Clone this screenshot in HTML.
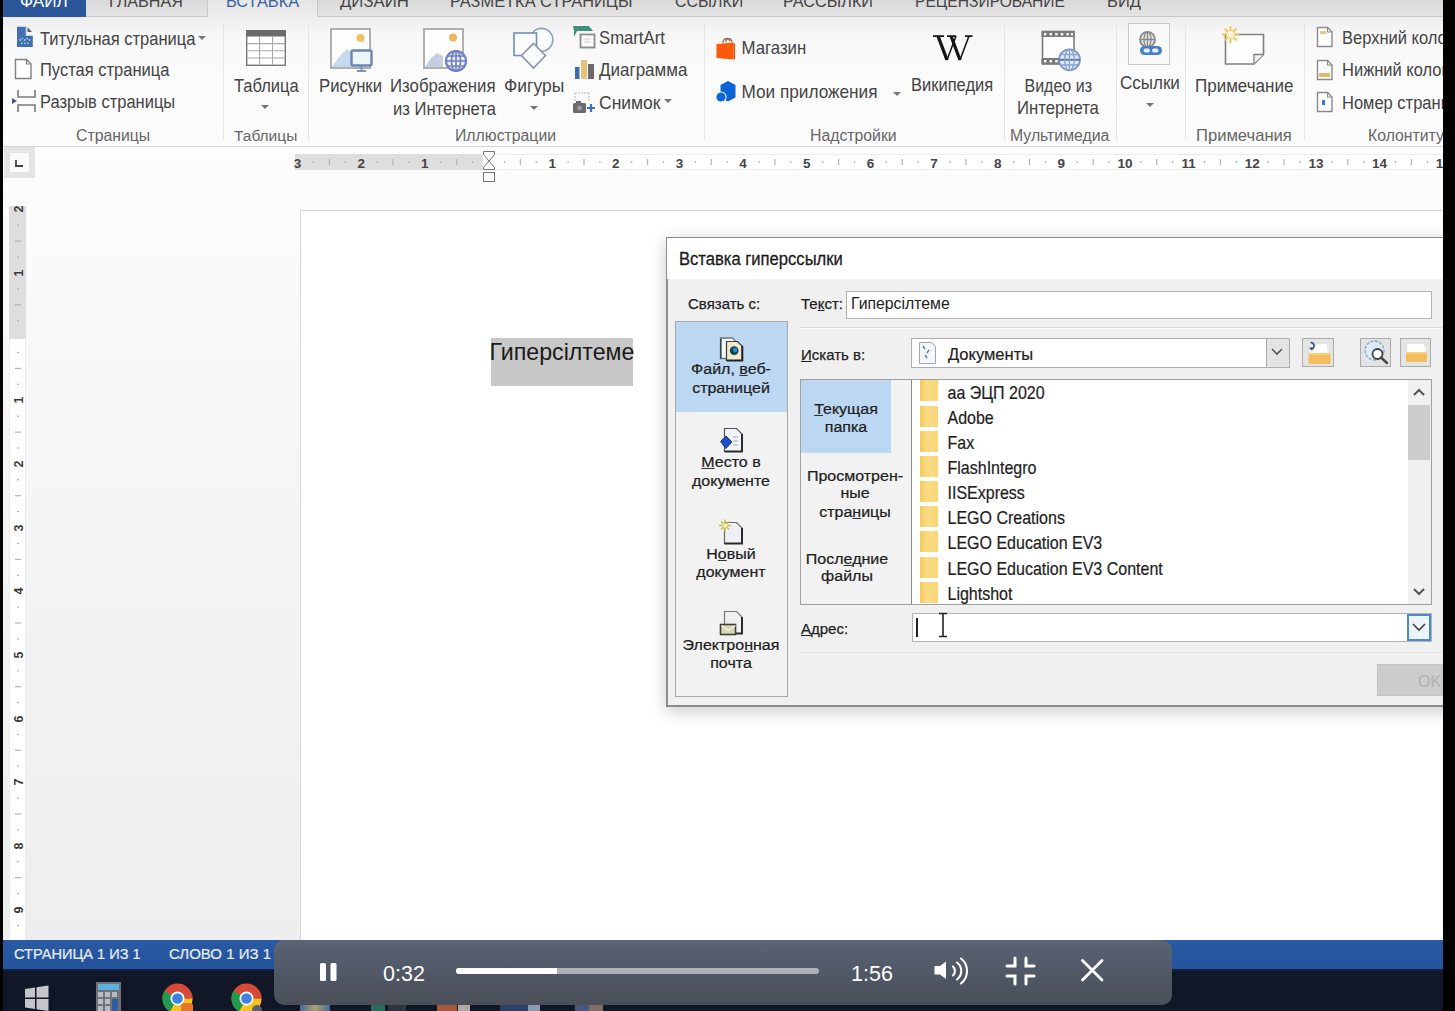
<!DOCTYPE html><html><head><meta charset="utf-8"><style>
    html,body{margin:0;padding:0;width:1455px;height:1011px;overflow:hidden;background:#fff}
    body{position:relative;font-family:"Liberation Sans",sans-serif}
    .t{position:absolute;white-space:nowrap}
    .r{position:absolute;box-sizing:border-box}
    svg.r{box-sizing:content-box}
    </style></head><body>
    <div class="r" style="left:0px;top:147px;width:1455px;height:793px;background:linear-gradient(#fdfdfd 0px,#f8f8f8 200px,#f2f2f2 500px,#eeeeee 793px)"></div>
<div class="r" style="left:0px;top:16px;width:1455px;height:131px;background:linear-gradient(#ececec 0px,#f7f7f7 18px,#fbfbfb 60px,#fcfcfc 131px)"></div>
<div class="r" style="left:0px;top:0px;width:1455px;height:17px;background:linear-gradient(#d9d9d9,#e4e4e4)"></div>
<div class="r" style="left:86px;top:16px;width:122px;height:1px;background:#c8c8c8"></div>
<div class="r" style="left:317px;top:16px;width:1140px;height:1px;background:#c8c8c8"></div>
<div class="r" style="left:207px;top:0px;width:1px;height:17px;background:#c8c8c8"></div>
<div class="r" style="left:317px;top:0px;width:1px;height:17px;background:#c8c8c8"></div>
<div class="r" style="left:208px;top:0px;width:109px;height:17px;background:linear-gradient(#e6e6e6,#ececec)"></div>
<div class="r" style="left:3px;top:0px;width:83px;height:17px;background:#2b579a"></div>
<div class="r" style="left:0px;top:146px;width:1455px;height:1px;background:#d6d6d6"></div>
<div class="t" style="left:20px;top:-7.51px;font-size:17.2px;line-height:17.2px;color:#fff;">ФАЙЛ</div>
<div class="t" style="left:109px;top:-7.50px;font-size:16.1px;line-height:16.1px;color:#444;">ГЛАВНАЯ</div>
<div class="t" style="left:226px;top:-7.50px;font-size:16.3px;line-height:16.3px;color:#3a62a6;">ВСТАВКА</div>
<div class="t" style="left:340px;top:-6.50px;font-size:16.8px;line-height:16.8px;color:#444;">ДИЗАЙН</div>
<div class="t" style="left:450px;top:-7.51px;font-size:16.4px;line-height:16.4px;color:#444;">РАЗМЕТКА СТРАНИЦЫ</div>
<div class="t" style="left:675px;top:-6.51px;font-size:15.9px;line-height:15.9px;color:#444;">ССЫЛКИ</div>
<div class="t" style="left:783px;top:-7.50px;font-size:16.3px;line-height:16.3px;color:#444;">РАССЫЛКИ</div>
<div class="t" style="left:915px;top:-6.50px;font-size:15.6px;line-height:15.6px;color:#444;">РЕЦЕНЗИРОВАНИЕ</div>
<div class="t" style="left:1107px;top:-7.50px;font-size:16.5px;line-height:16.5px;color:#444;">ВИД</div>
<div class="r" style="left:223px;top:24px;width:1px;height:116px;background:#e6e6e6"></div>
<div class="r" style="left:308px;top:24px;width:1px;height:116px;background:#e6e6e6"></div>
<div class="r" style="left:704px;top:24px;width:1px;height:116px;background:#e6e6e6"></div>
<div class="r" style="left:1004px;top:24px;width:1px;height:116px;background:#e6e6e6"></div>
<div class="r" style="left:1116px;top:24px;width:1px;height:116px;background:#e6e6e6"></div>
<div class="r" style="left:1185px;top:24px;width:1px;height:116px;background:#e6e6e6"></div>
<div class="r" style="left:1304px;top:24px;width:1px;height:116px;background:#e6e6e6"></div>
<div class="t" style="left:40px;top:30.51px;font-size:16.5px;line-height:16.5px;color:#444;transform:scaleY(1.1);transform-origin:0 13.97px;">Титульная страница</div>
<div class="t" style="left:40px;top:62.01px;font-size:16.5px;line-height:16.5px;color:#444;transform:scaleY(1.1);transform-origin:0 13.97px;">Пустая страница</div>
<div class="t" style="left:40px;top:94.01px;font-size:16.5px;line-height:16.5px;color:#444;transform:scaleY(1.1);transform-origin:0 13.97px;">Разрыв страницы</div>
<div class="t" style="left:76px;top:127.50px;font-size:15.8px;line-height:15.8px;color:#666;">Страницы</div>
<div class="t" style="left:234px;top:77.51px;font-size:16.5px;line-height:16.5px;color:#444;transform:scaleY(1.1);transform-origin:0 13.97px;">Таблица</div>
<div class="t" style="left:234px;top:128.00px;font-size:15.5px;line-height:15.5px;color:#666;">Таблицы</div>
<div class="t" style="left:319px;top:78.62px;font-size:16.7px;line-height:16.7px;color:#444;transform:scaleY(1.1);transform-origin:0 14.14px;">Рисунки</div>
<div class="t" style="left:390px;top:78.63px;font-size:16.8px;line-height:16.8px;color:#444;transform:scaleY(1.1);transform-origin:0 14.22px;">Изображения</div>
<div class="t" style="left:393px;top:101.61px;font-size:16.6px;line-height:16.6px;color:#444;transform:scaleY(1.1);transform-origin:0 14.05px;">из Интернета</div>
<div class="t" style="left:504px;top:77.58px;font-size:17.5px;line-height:17.5px;color:#444;transform:scaleY(1.1);transform-origin:0 14.81px;">Фигуры</div>
<div class="t" style="left:599px;top:31.12px;font-size:16.7px;line-height:16.7px;color:#444;transform:scaleY(1.1);transform-origin:0 14.14px;">SmartArt</div>
<div class="t" style="left:599px;top:62.05px;font-size:17px;line-height:17px;color:#444;transform:scaleY(1.1);transform-origin:0 14.39px;">Диаграмма</div>
<div class="t" style="left:599px;top:94.58px;font-size:17.5px;line-height:17.5px;color:#444;transform:scaleY(1.1);transform-origin:0 14.81px;">Снимок</div>
<div class="t" style="left:455px;top:128.00px;font-size:15.8px;line-height:15.8px;color:#666;">Иллюстрации</div>
<div class="t" style="left:741.5px;top:41.13px;font-size:16.8px;line-height:16.8px;color:#444;transform:scaleY(1.1);transform-origin:0 14.22px;">Магазин</div>
<div class="t" style="left:741.5px;top:84.07px;font-size:17.2px;line-height:17.2px;color:#444;transform:scaleY(1.1);transform-origin:0 14.56px;">Мои приложения</div>
<div class="t" style="left:911px;top:76.51px;font-size:16.5px;line-height:16.5px;color:#444;transform:scaleY(1.1);transform-origin:0 13.97px;">Википедия</div>
<div class="t" style="left:810px;top:127.50px;font-size:15.8px;line-height:15.8px;color:#666;">Надстройки</div>
<div class="t" style="left:1024.5px;top:78.56px;font-size:16px;line-height:16px;color:#444;transform:scaleY(1.1);transform-origin:0 13.54px;">Видео из</div>
<div class="t" style="left:1017px;top:101.12px;font-size:16.7px;line-height:16.7px;color:#444;transform:scaleY(1.1);transform-origin:0 14.14px;">Интернета</div>
<div class="t" style="left:1010px;top:127.50px;font-size:15.8px;line-height:15.8px;color:#666;">Мультимедиа</div>
<div class="t" style="left:1120px;top:74.55px;font-size:17px;line-height:17px;color:#444;transform:scaleY(1.1);transform-origin:0 14.39px;">Ссылки</div>
<div class="t" style="left:1195px;top:77.55px;font-size:17px;line-height:17px;color:#444;transform:scaleY(1.1);transform-origin:0 14.39px;">Примечание</div>
<div class="t" style="left:1196px;top:127.51px;font-size:16.6px;line-height:16.6px;color:#666;">Примечания</div>
<div class="t" style="left:1342px;top:30.01px;font-size:16.5px;line-height:16.5px;color:#444;transform:scaleY(1.1);transform-origin:0 13.97px;">Верхний колонтитул</div>
<div class="t" style="left:1342px;top:62.01px;font-size:16.5px;line-height:16.5px;color:#444;transform:scaleY(1.1);transform-origin:0 13.97px;">Нижний колонтитул</div>
<div class="t" style="left:1342px;top:94.51px;font-size:16.5px;line-height:16.5px;color:#444;transform:scaleY(1.1);transform-origin:0 13.97px;">Номер страницы</div>
<div class="t" style="left:1368px;top:127.50px;font-size:15.8px;line-height:15.8px;color:#666;">Колонтитулы</div>
<svg class="r" style="left:15px;top:25px" width="20" height="24" viewBox="0 0 20 24"><path d="M2 1.7 h8.8 v9.3 h7 v11 h-15.8 z" fill="#3f6fae"/><path d="M10.8 1.7 h1 v8.3 h6 v1 h-7 z" fill="#b8d4f4"/><path d="M12.5 2 l4.5 5 h-4.5 z" fill="#5a6470"/><g fill="#a8cdf4"><circle cx="5" cy="15" r="0.9"/><circle cx="7.2" cy="13.6" r="0.9"/><circle cx="9.8" cy="15" r="0.9"/><circle cx="12.2" cy="13.6" r="0.9"/><circle cx="14.6" cy="15" r="0.9"/><circle cx="6.8" cy="18.3" r="0.9"/><circle cx="9.9" cy="18.3" r="0.9"/><circle cx="13" cy="18.3" r="0.9"/></g></svg>
<svg class="r" style="left:14px;top:58px" width="20" height="22" viewBox="0 0 20 22"><path d="M1.5 1.5 h11 l4.5 4.5 v14.5 h-15.5 z" fill="#fff" stroke="#808080" stroke-width="1.4"/><path d="M12.5 1.5 v4.5 h4.5" fill="none" stroke="#808080" stroke-width="1.2"/></svg>
<svg class="r" style="left:11px;top:89px" width="27" height="25" viewBox="0 0 27 25"><path d="M7 1 v7 h17 v-7 M7 23 v-7 h17 v7" fill="none" stroke="#7a7a7a" stroke-width="1.6"/><path d="M1 9 l5 3 l-5 3 z" fill="#4a5a7a"/></svg>
<svg class="r" style="left:244px;top:28px" width="44" height="40" viewBox="0 0 44 40"><rect x="2" y="2" width="40" height="6.5" fill="#6b6b6b"/><rect x="2.7" y="2.7" width="38.6" height="34.6" fill="#fff" stroke="#777" stroke-width="1.4"/><rect x="2" y="2" width="40" height="6.5" fill="#6b6b6b"/><path d="M15.5 8 v29 M28.5 8 v29 M3 15.6 h38 M3 22.8 h38 M3 30 h38" stroke="#a8a8a8" stroke-width="1.1"/></svg>
<svg class="r" style="left:259px;top:103px" width="12" height="8" viewBox="0 0 12 8"><path d="M2 2 h8 l-4 4 z" fill="#777"/></svg>
<svg class="r" style="left:328px;top:26px" width="48" height="48" viewBox="0 0 48 48"><rect x="3" y="3" width="39" height="39" fill="#fdfdfd" stroke="#a8a8a8" stroke-width="1.8"/><circle cx="32.5" cy="12" r="4" fill="#ecc35e"/><path d="M4 41 l7 -10 l8 -8 l6 5 v13 z" fill="#c4d8ee"/><rect x="23.5" y="24.5" width="20" height="15" rx="1.5" fill="#eef6fd" stroke="#6a87ad" stroke-width="2.4"/><path d="M33.5 40 v4 M29 45 h9" stroke="#7a96b8" stroke-width="2"/></svg>
<svg class="r" style="left:421px;top:26px" width="48" height="48" viewBox="0 0 48 48"><rect x="3" y="3" width="39" height="39" fill="#fdfdfd" stroke="#a8a8a8" stroke-width="1.8"/><circle cx="32" cy="11.5" r="4" fill="#f1b45c"/><path d="M4 41 l6 -9 l6 -5 l6 3 v11 z" fill="#c3cfe0"/><circle cx="35" cy="35" r="10" fill="#e9f0fb" stroke="#6f7fc4" stroke-width="2.2"/><path d="M25 35 h20 M35 25 v20 M27 30 h16 M27 40 h16" stroke="#6f7fc4" stroke-width="1.6"/><ellipse cx="35" cy="35" rx="4.5" ry="10" fill="none" stroke="#6f7fc4" stroke-width="1.6"/></svg>
<svg class="r" style="left:510px;top:24px" width="48" height="48" viewBox="0 0 48 48"><circle cx="31.5" cy="15.8" r="11.4" fill="#fafbfd" stroke="#8ea0c4" stroke-width="1.6"/><rect x="4" y="9" width="22.5" height="22.5" fill="#fbfcfe" stroke="#6f8db8" stroke-width="1.6"/><path d="M23.5 19.5 l12 12 l-12 12.5 l-12 -12.5 z" fill="#fafbfd" stroke="#8a93a8" stroke-width="1.6"/></svg>
<svg class="r" style="left:528px;top:104px" width="12" height="8" viewBox="0 0 12 8"><path d="M2 2 h8 l-4 4 z" fill="#777"/></svg>
<svg class="r" style="left:570px;top:23px" width="28" height="28" viewBox="0 0 28 28"><path d="M3 3 h16 l4 5 h-16 l-3 6 v-6 z" fill="#3f8f7a"/><rect x="10.5" y="11.5" width="14" height="13" fill="#fafafa" stroke="#8a8a8a" stroke-width="1.8"/><path d="M14 16 h7 M14 19 h7" stroke="#ccc" stroke-width="1"/></svg>
<svg class="r" style="left:572px;top:58px" width="24" height="22" viewBox="0 0 24 22"><rect x="3" y="9" width="4.5" height="12" fill="#3b6ea8"/><rect x="9" y="2" width="6" height="19" fill="#e8c27a"/><rect x="16" y="6" width="6" height="15" fill="#6a6a6a"/></svg>
<svg class="r" style="left:571px;top:91px" width="26" height="24" viewBox="0 0 26 24"><path d="M4 2 h14 M4 2 v8 M18 2 v8" fill="none" stroke="#bbb" stroke-width="1" stroke-dasharray="2 1"/><rect x="2" y="12" width="13" height="10" rx="1.5" fill="#6a6a6a"/><rect x="5" y="10" width="5" height="3" fill="#6a6a6a"/><circle cx="8.5" cy="17" r="2.5" fill="#999"/><path d="M16 17 h8 M20 13 v8" stroke="#3a6fc0" stroke-width="2.2"/></svg>
<svg class="r" style="left:663px;top:97px" width="10" height="8" viewBox="0 0 10 8"><path d="M1 2 h8 l-4 4 z" fill="#777"/></svg>
<svg class="r" style="left:197px;top:34px" width="10" height="8" viewBox="0 0 10 8"><path d="M1 2 h8 l-4 4 z" fill="#777"/></svg>
<svg class="r" style="left:713px;top:34px" width="26" height="28" viewBox="0 0 26 28"><path d="M10 9 c0 -5 5 -6 7 -2 M13 8 c0 -4 5 -5 6 0" fill="none" stroke="#9a6a50" stroke-width="1.3"/><path d="M3.5 10 l17 -1.5 v17 l-17 -1.5 z" fill="#ff5a0a"/><path d="M20.5 8.5 l1.5 1.5 v15 l-1.5 0.5z" fill="#f04a00"/></svg>
<svg class="r" style="left:713px;top:79px" width="26" height="26" viewBox="0 0 26 26"><path d="M7.5 6 l7.5 -4 l7.5 4 v12.5 l-7.5 4 l-7.5 -4 z" fill="#0a64d6"/><circle cx="8" cy="18" r="5.6" fill="#fff"/><circle cx="8" cy="18" r="4.6" fill="#0d66d8"/></svg>
<svg class="r" style="left:891px;top:90px" width="12" height="8" viewBox="0 0 12 8"><path d="M2 2 h8 l-4 4 z" fill="#777"/></svg>
<svg class="r" style="left:930px;top:33px" width="46" height="30" viewBox="0 0 46 30"><g stroke="#151515" fill="none" stroke-linecap="butt"><path d="M8 3 L17 27" stroke-width="3.4"/><path d="M17 27 L26 3" stroke-width="1.6"/><path d="M21 3 L30 27" stroke-width="3.2"/><path d="M30 27 L39 3" stroke-width="1.6"/><path d="M3 3.2 h11 M17 3.2 h9 M35 3.2 h7.5" stroke-width="1.8"/></g></svg>
<svg class="r" style="left:1036px;top:26px" width="52" height="52" viewBox="0 0 52 52"><rect x="6.5" y="5.5" width="31.5" height="32.5" fill="#fdfdfd" stroke="#7a7a7a" stroke-width="1.6"/><rect x="5.5" y="5" width="33" height="6" fill="#7a7a7a"/><rect x="5.5" y="32" width="33" height="6" fill="#7a7a7a"/><g fill="#fff"><rect x="8" y="7" width="2.4" height="2.4"/><rect x="13.6" y="7" width="2.4" height="2.4"/><rect x="19.2" y="7" width="2.4" height="2.4"/><rect x="24.8" y="7" width="2.4" height="2.4"/><rect x="30.4" y="7" width="2.4" height="2.4"/><rect x="35" y="7" width="2" height="2.4"/><rect x="8" y="34" width="2.4" height="2.4"/><rect x="13.6" y="34" width="2.4" height="2.4"/><rect x="19.2" y="34" width="2.4" height="2.4"/></g><circle cx="33.5" cy="33.8" r="10.5" fill="#dfe9f7" stroke="#7d98c8" stroke-width="1.8"/><path d="M23 33.8 h21" stroke="#5f7aa8" stroke-width="2"/><path d="M33.5 23.3 v21 M25 28.5 h17 M25 39 h17" stroke="#8aa4d0" stroke-width="1.3"/><ellipse cx="33.5" cy="33.8" rx="4.8" ry="10.5" fill="none" stroke="#8aa4d0" stroke-width="1.3"/></svg>
<div class="r" style="left:1128px;top:23px;width:42px;height:42px;border:1px solid #c8c8c8;background:#f9f9f9"></div>
<svg class="r" style="left:1128px;top:18px" width="43" height="44" viewBox="0 0 43 44"><circle cx="19.5" cy="21.5" r="7.5" fill="#e2e2e2" stroke="#8a8a8a" stroke-width="1.8"/><path d="M12 21.5 h15 M19.5 14 v15" stroke="#8a8a8a" stroke-width="1.3"/><ellipse cx="19.5" cy="21.5" rx="3.5" ry="7.5" fill="none" stroke="#8a8a8a" stroke-width="1.2"/><rect x="12" y="28" width="22" height="9" rx="4.5" fill="#4a7fc6"/><rect x="15.5" y="30.5" width="6.5" height="4" rx="2" fill="#e8f0fb"/><rect x="24" y="30.5" width="6.5" height="4" rx="2" fill="#e8f0fb"/></svg>
<svg class="r" style="left:1144px;top:101px" width="12" height="8" viewBox="0 0 12 8"><path d="M2 2 h8 l-4 4 z" fill="#777"/></svg>
<svg class="r" style="left:1218px;top:24px" width="52" height="44" viewBox="0 0 52 44"><path d="M7.5 10.5 h38 v20 l-9.5 9.5 h-28.5 z" fill="#fdfdfd" stroke="#808080" stroke-width="1.6"/><path d="M36 39.5 v-9 h9.5" fill="#f2f2f2" stroke="#808080" stroke-width="1.3"/><g stroke="#f2c65a" stroke-width="2"><path d="M12.5 2 v17 M4 10.5 h17 M6.5 4.5 l12 12 M18.5 4.5 l-12 12"/></g><circle cx="12.5" cy="10.5" r="3.5" fill="#fff6d2"/></svg>
<svg class="r" style="left:1316px;top:26px" width="20" height="22" viewBox="0 0 20 22"><path d="M1.5 1.5 h10 l4.5 4.5 v14.5 h-14.5 z" fill="#fff" stroke="#8a8a8a" stroke-width="1.4"/><path d="M11.5 1.5 v4.5 h4.5" fill="none" stroke="#8a8a8a" stroke-width="1.2"/><rect x="4" y="5" width="6" height="3" fill="#e6c88a"/></svg>
<svg class="r" style="left:1316px;top:59px" width="20" height="22" viewBox="0 0 20 22"><path d="M1.5 1.5 h10 l4.5 4.5 v14.5 h-14.5 z" fill="#fff" stroke="#8a8a8a" stroke-width="1.4"/><path d="M11.5 1.5 v4.5 h4.5" fill="none" stroke="#8a8a8a" stroke-width="1.2"/><rect x="3" y="14" width="11" height="4" fill="#e0b870"/></svg>
<svg class="r" style="left:1316px;top:91px" width="20" height="22" viewBox="0 0 20 22"><path d="M1.5 1.5 h10 l4.5 4.5 v14.5 h-14.5 z" fill="#fff" stroke="#8a8a8a" stroke-width="1.4"/><path d="M11.5 1.5 v4.5 h4.5" fill="none" stroke="#8a8a8a" stroke-width="1.2"/><rect x="6" y="9" width="3" height="5" fill="#3c76c4"/></svg>
<div class="r" style="left:4px;top:147px;width:31px;height:31px;background:#e4e4e4"></div>
<div class="r" style="left:10px;top:153px;width:19px;height:19px;background:#fafafa"></div>
<svg class="r" style="left:10px;top:153px" width="19" height="19" viewBox="0 0 19 19"><path d="M6 7 v6 h7" fill="none" stroke="#444" stroke-width="1.8"/></svg>
<div class="r" style="left:295px;top:154px;width:188px;height:16px;background:#dedede"></div>
<div class="r" style="left:495px;top:154px;width:948px;height:16px;background:#fff;border-top:1px solid #ececec;border-bottom:1px solid #ececec"></div>
<svg class="r" style="left:0px;top:145px" width="1455" height="40" viewBox="0 0 1455 40"><rect x="312.9" y="16" width="1.2" height="2" fill="#b4b4b4"/><rect x="328.8" y="14" width="1.2" height="6" fill="#b4b4b4"/><rect x="344.7" y="16" width="1.2" height="2" fill="#b4b4b4"/><rect x="376.5" y="16" width="1.2" height="2" fill="#b4b4b4"/><rect x="392.4" y="14" width="1.2" height="6" fill="#b4b4b4"/><rect x="408.3" y="16" width="1.2" height="2" fill="#b4b4b4"/><rect x="440.2" y="16" width="1.2" height="2" fill="#b4b4b4"/><rect x="456.1" y="14" width="1.2" height="6" fill="#b4b4b4"/><rect x="472.0" y="16" width="1.2" height="2" fill="#b4b4b4"/><rect x="503.8" y="16" width="1.2" height="2" fill="#b4b4b4"/><rect x="519.7" y="14" width="1.2" height="6" fill="#b4b4b4"/><rect x="535.6" y="16" width="1.2" height="2" fill="#b4b4b4"/><rect x="567.5" y="16" width="1.2" height="2" fill="#b4b4b4"/><rect x="583.4" y="14" width="1.2" height="6" fill="#b4b4b4"/><rect x="599.3" y="16" width="1.2" height="2" fill="#b4b4b4"/><rect x="631.1" y="16" width="1.2" height="2" fill="#b4b4b4"/><rect x="647.0" y="14" width="1.2" height="6" fill="#b4b4b4"/><rect x="662.9" y="16" width="1.2" height="2" fill="#b4b4b4"/><rect x="694.8" y="16" width="1.2" height="2" fill="#b4b4b4"/><rect x="710.7" y="14" width="1.2" height="6" fill="#b4b4b4"/><rect x="726.6" y="16" width="1.2" height="2" fill="#b4b4b4"/><rect x="758.4" y="16" width="1.2" height="2" fill="#b4b4b4"/><rect x="774.3" y="14" width="1.2" height="6" fill="#b4b4b4"/><rect x="790.2" y="16" width="1.2" height="2" fill="#b4b4b4"/><rect x="822.1" y="16" width="1.2" height="2" fill="#b4b4b4"/><rect x="838.0" y="14" width="1.2" height="6" fill="#b4b4b4"/><rect x="853.9" y="16" width="1.2" height="2" fill="#b4b4b4"/><rect x="885.7" y="16" width="1.2" height="2" fill="#b4b4b4"/><rect x="901.6" y="14" width="1.2" height="6" fill="#b4b4b4"/><rect x="917.5" y="16" width="1.2" height="2" fill="#b4b4b4"/><rect x="949.4" y="16" width="1.2" height="2" fill="#b4b4b4"/><rect x="965.3" y="14" width="1.2" height="6" fill="#b4b4b4"/><rect x="981.2" y="16" width="1.2" height="2" fill="#b4b4b4"/><rect x="1013.0" y="16" width="1.2" height="2" fill="#b4b4b4"/><rect x="1028.9" y="14" width="1.2" height="6" fill="#b4b4b4"/><rect x="1044.8" y="16" width="1.2" height="2" fill="#b4b4b4"/><rect x="1076.7" y="16" width="1.2" height="2" fill="#b4b4b4"/><rect x="1092.6" y="14" width="1.2" height="6" fill="#b4b4b4"/><rect x="1108.5" y="16" width="1.2" height="2" fill="#b4b4b4"/><rect x="1140.3" y="16" width="1.2" height="2" fill="#b4b4b4"/><rect x="1156.2" y="14" width="1.2" height="6" fill="#b4b4b4"/><rect x="1172.1" y="16" width="1.2" height="2" fill="#b4b4b4"/><rect x="1204.0" y="16" width="1.2" height="2" fill="#b4b4b4"/><rect x="1219.9" y="14" width="1.2" height="6" fill="#b4b4b4"/><rect x="1235.8" y="16" width="1.2" height="2" fill="#b4b4b4"/><rect x="1267.6" y="16" width="1.2" height="2" fill="#b4b4b4"/><rect x="1283.5" y="14" width="1.2" height="6" fill="#b4b4b4"/><rect x="1299.4" y="16" width="1.2" height="2" fill="#b4b4b4"/><rect x="1331.3" y="16" width="1.2" height="2" fill="#b4b4b4"/><rect x="1347.2" y="14" width="1.2" height="6" fill="#b4b4b4"/><rect x="1363.1" y="16" width="1.2" height="2" fill="#b4b4b4"/><rect x="1394.9" y="16" width="1.2" height="2" fill="#b4b4b4"/><rect x="1410.8" y="14" width="1.2" height="6" fill="#b4b4b4"/><rect x="1426.7" y="16" width="1.2" height="2" fill="#b4b4b4"/></svg>
<div class="t" style="left:97.55000000000001px;width:400px;text-align:center;top:156.82px;font-size:13.5px;line-height:13.5px;color:#444;font-weight:700;">3</div>
<div class="t" style="left:161.2px;width:400px;text-align:center;top:156.82px;font-size:13.5px;line-height:13.5px;color:#444;font-weight:700;">2</div>
<div class="t" style="left:224.85000000000002px;width:400px;text-align:center;top:156.82px;font-size:13.5px;line-height:13.5px;color:#444;font-weight:700;">1</div>
<div class="t" style="left:352.15px;width:400px;text-align:center;top:156.82px;font-size:13.5px;line-height:13.5px;color:#444;font-weight:700;">1</div>
<div class="t" style="left:415.79999999999995px;width:400px;text-align:center;top:156.82px;font-size:13.5px;line-height:13.5px;color:#444;font-weight:700;">2</div>
<div class="t" style="left:479.45000000000005px;width:400px;text-align:center;top:156.82px;font-size:13.5px;line-height:13.5px;color:#444;font-weight:700;">3</div>
<div class="t" style="left:543.1px;width:400px;text-align:center;top:156.82px;font-size:13.5px;line-height:13.5px;color:#444;font-weight:700;">4</div>
<div class="t" style="left:606.75px;width:400px;text-align:center;top:156.82px;font-size:13.5px;line-height:13.5px;color:#444;font-weight:700;">5</div>
<div class="t" style="left:670.4px;width:400px;text-align:center;top:156.82px;font-size:13.5px;line-height:13.5px;color:#444;font-weight:700;">6</div>
<div class="t" style="left:734.05px;width:400px;text-align:center;top:156.82px;font-size:13.5px;line-height:13.5px;color:#444;font-weight:700;">7</div>
<div class="t" style="left:797.7px;width:400px;text-align:center;top:156.82px;font-size:13.5px;line-height:13.5px;color:#444;font-weight:700;">8</div>
<div class="t" style="left:861.3499999999999px;width:400px;text-align:center;top:156.82px;font-size:13.5px;line-height:13.5px;color:#444;font-weight:700;">9</div>
<div class="t" style="left:925.0px;width:400px;text-align:center;top:156.82px;font-size:13.5px;line-height:13.5px;color:#444;font-weight:700;">10</div>
<div class="t" style="left:988.6500000000001px;width:400px;text-align:center;top:156.82px;font-size:13.5px;line-height:13.5px;color:#444;font-weight:700;">11</div>
<div class="t" style="left:1052.3px;width:400px;text-align:center;top:156.82px;font-size:13.5px;line-height:13.5px;color:#444;font-weight:700;">12</div>
<div class="t" style="left:1115.9499999999998px;width:400px;text-align:center;top:156.82px;font-size:13.5px;line-height:13.5px;color:#444;font-weight:700;">13</div>
<div class="t" style="left:1179.6px;width:400px;text-align:center;top:156.82px;font-size:13.5px;line-height:13.5px;color:#444;font-weight:700;">14</div>
<div class="t" style="left:1243.25px;width:400px;text-align:center;top:156.82px;font-size:13.5px;line-height:13.5px;color:#444;font-weight:700;">15</div>
<svg class="r" style="left:481px;top:150px" width="16" height="33" viewBox="0 0 16 33"><path d="M2.5 1.5 h11 v3 l-5.5 6.5 l5.5 6.5 v2 h-11 v-2 l5.5 -6.5 l-5.5 -6.5 z" fill="#fdfdfd" stroke="#777" stroke-width="1"/><rect x="2.5" y="22.5" width="11" height="9" fill="#fdfdfd" stroke="#777" stroke-width="1"/></svg>
<div class="r" style="left:9px;top:206px;width:17px;height:133px;background:#dedede"></div>
<div class="r" style="left:9px;top:339px;width:17px;height:601px;background:#fff;border-left:1px solid #ececec;border-right:1px solid #ececec"></div>
<svg class="r" style="left:0px;top:0px" width="40" height="1011" viewBox="0 0 40 1011"><rect x="17" y="224.6" width="2" height="1.2" fill="#b4b4b4"/><rect x="15" y="240.5" width="6" height="1.2" fill="#b4b4b4"/><rect x="17" y="256.4" width="2" height="1.2" fill="#b4b4b4"/><rect x="17" y="288.3" width="2" height="1.2" fill="#b4b4b4"/><rect x="15" y="304.2" width="6" height="1.2" fill="#b4b4b4"/><rect x="17" y="320.1" width="2" height="1.2" fill="#b4b4b4"/><rect x="17" y="351.9" width="2" height="1.2" fill="#b4b4b4"/><rect x="15" y="367.8" width="6" height="1.2" fill="#b4b4b4"/><rect x="17" y="383.7" width="2" height="1.2" fill="#b4b4b4"/><rect x="17" y="415.6" width="2" height="1.2" fill="#b4b4b4"/><rect x="15" y="431.5" width="6" height="1.2" fill="#b4b4b4"/><rect x="17" y="447.4" width="2" height="1.2" fill="#b4b4b4"/><rect x="17" y="479.2" width="2" height="1.2" fill="#b4b4b4"/><rect x="15" y="495.1" width="6" height="1.2" fill="#b4b4b4"/><rect x="17" y="511.0" width="2" height="1.2" fill="#b4b4b4"/><rect x="17" y="542.9" width="2" height="1.2" fill="#b4b4b4"/><rect x="15" y="558.8" width="6" height="1.2" fill="#b4b4b4"/><rect x="17" y="574.7" width="2" height="1.2" fill="#b4b4b4"/><rect x="17" y="606.5" width="2" height="1.2" fill="#b4b4b4"/><rect x="15" y="622.4" width="6" height="1.2" fill="#b4b4b4"/><rect x="17" y="638.3" width="2" height="1.2" fill="#b4b4b4"/><rect x="17" y="670.2" width="2" height="1.2" fill="#b4b4b4"/><rect x="15" y="686.1" width="6" height="1.2" fill="#b4b4b4"/><rect x="17" y="702.0" width="2" height="1.2" fill="#b4b4b4"/><rect x="17" y="733.8" width="2" height="1.2" fill="#b4b4b4"/><rect x="15" y="749.7" width="6" height="1.2" fill="#b4b4b4"/><rect x="17" y="765.6" width="2" height="1.2" fill="#b4b4b4"/><rect x="17" y="797.5" width="2" height="1.2" fill="#b4b4b4"/><rect x="15" y="813.4" width="6" height="1.2" fill="#b4b4b4"/><rect x="17" y="829.3" width="2" height="1.2" fill="#b4b4b4"/><rect x="17" y="861.1" width="2" height="1.2" fill="#b4b4b4"/><rect x="15" y="877.0" width="6" height="1.2" fill="#b4b4b4"/><rect x="17" y="892.9" width="2" height="1.2" fill="#b4b4b4"/><rect x="17" y="924.8" width="2" height="1.2" fill="#b4b4b4"/></svg>
<div class="t" style="left:9px;top:201.3px;width:20px;height:16px;text-align:center;font-size:12.5px;line-height:16px;color:#3a3a3a;font-weight:700;transform:rotate(-90deg)">2</div>
<div class="t" style="left:9px;top:265.0px;width:20px;height:16px;text-align:center;font-size:12.5px;line-height:16px;color:#3a3a3a;font-weight:700;transform:rotate(-90deg)">1</div>
<div class="t" style="left:9px;top:392.2px;width:20px;height:16px;text-align:center;font-size:12.5px;line-height:16px;color:#3a3a3a;font-weight:700;transform:rotate(-90deg)">1</div>
<div class="t" style="left:9px;top:455.9px;width:20px;height:16px;text-align:center;font-size:12.5px;line-height:16px;color:#3a3a3a;font-weight:700;transform:rotate(-90deg)">2</div>
<div class="t" style="left:9px;top:519.5px;width:20px;height:16px;text-align:center;font-size:12.5px;line-height:16px;color:#3a3a3a;font-weight:700;transform:rotate(-90deg)">3</div>
<div class="t" style="left:9px;top:583.2px;width:20px;height:16px;text-align:center;font-size:12.5px;line-height:16px;color:#3a3a3a;font-weight:700;transform:rotate(-90deg)">4</div>
<div class="t" style="left:9px;top:646.9px;width:20px;height:16px;text-align:center;font-size:12.5px;line-height:16px;color:#3a3a3a;font-weight:700;transform:rotate(-90deg)">5</div>
<div class="t" style="left:9px;top:710.5px;width:20px;height:16px;text-align:center;font-size:12.5px;line-height:16px;color:#3a3a3a;font-weight:700;transform:rotate(-90deg)">6</div>
<div class="t" style="left:9px;top:774.2px;width:20px;height:16px;text-align:center;font-size:12.5px;line-height:16px;color:#3a3a3a;font-weight:700;transform:rotate(-90deg)">7</div>
<div class="t" style="left:9px;top:837.8px;width:20px;height:16px;text-align:center;font-size:12.5px;line-height:16px;color:#3a3a3a;font-weight:700;transform:rotate(-90deg)">8</div>
<div class="t" style="left:9px;top:901.5px;width:20px;height:16px;text-align:center;font-size:12.5px;line-height:16px;color:#3a3a3a;font-weight:700;transform:rotate(-90deg)">9</div>
<div class="r" style="left:300px;top:210px;width:1160px;height:730px;background:#fff;border-left:1px solid #d8d8d8;border-top:1px solid #d8d8d8"></div>
<div class="r" style="left:491px;top:338px;width:142px;height:48px;background:#c8c8c8"></div>
<div class="t" style="left:489.5px;top:340.50px;font-size:23.2px;line-height:23.2px;color:#1a1a1a;">Гиперсілтеме</div>
<div class="r" style="left:0px;top:940px;width:1455px;height:31px;background:linear-gradient(#2a5aa3,#24529c)"></div>
<div class="t" style="left:14px;top:947.00px;font-size:14.6px;line-height:14.6px;color:#e8eef7;-webkit-text-stroke:0.2px #e8eef7">СТРАНИЦА 1 ИЗ 1</div>
<div class="t" style="left:169px;top:946.01px;font-size:15px;line-height:15px;color:#e8eef7;-webkit-text-stroke:0.2px #e8eef7">СЛОВО 1 ИЗ 1</div>
<div class="r" style="left:0px;top:971px;width:1455px;height:40px;background:#111726"></div>
<div class="r" style="left:0px;top:969px;width:1455px;height:2px;background:#0d2146"></div>
<svg class="r" style="left:24px;top:985px" width="26" height="26" viewBox="0 0 26 26"><path d="M1 4 l10 -1.5 v10 h-10 z M12.5 2.3 l12 -1.8 v12 h-12 z M1 14 h10 v10 l-10 -1.5 z M12.5 14 h12 v12 l-12 -1.8 z" fill="#c4c6ca"/></svg>
<svg class="r" style="left:95px;top:981px" width="28" height="30" viewBox="0 0 28 30"><rect x="1" y="1" width="25" height="30" fill="#6f7378"/><rect x="3" y="3" width="21" height="6" fill="#5fb2e0"/><g fill="#b8bcc2"><rect x="3" y="11" width="5" height="5"/><rect x="10" y="11" width="5" height="5"/><rect x="17" y="11" width="5" height="5"/><rect x="3" y="18" width="5" height="5"/><rect x="10" y="18" width="5" height="5"/><rect x="3" y="25" width="5" height="5"/><rect x="10" y="25" width="5" height="5"/></g><rect x="17" y="18" width="6" height="12" fill="#2d5fa0"/></svg>
<svg class="r" style="left:162px;top:983px" width="32" height="32" viewBox="0 0 32 32"><circle cx="15.5" cy="15.5" r="15" fill="#d84a38"/><path d="M15.5 15.5 L2.5 8 A15 15 0 0 0 8 28.5 z" fill="#1f9a4f"/><path d="M15.5 15.5 L8 28.5 A15 15 0 0 0 30.5 15.5 z" fill="#f5c51d"/><path d="M15.5 15.5 L30.5 15.5 A15 15 0 0 0 28.5 8 z" fill="#d84a38"/><circle cx="15.5" cy="15.5" r="7" fill="#fff"/><circle cx="15.5" cy="15.5" r="5.3" fill="#3e82e0"/><rect x="19" y="20" width="12" height="11" rx="3" fill="#e8762a"/></svg>
<svg class="r" style="left:231px;top:983px" width="32" height="32" viewBox="0 0 32 32"><circle cx="15.5" cy="15.5" r="15" fill="#d84a38"/><path d="M15.5 15.5 L2.5 8 A15 15 0 0 0 8 28.5 z" fill="#1f9a4f"/><path d="M15.5 15.5 L8 28.5 A15 15 0 0 0 30.5 15.5 z" fill="#f5c51d"/><path d="M15.5 15.5 L30.5 15.5 A15 15 0 0 0 28.5 8 z" fill="#d84a38"/><circle cx="15.5" cy="15.5" r="7" fill="#fff"/><circle cx="15.5" cy="15.5" r="5.3" fill="#3e82e0"/><circle cx="26" cy="27" r="5" fill="#5a6070"/></svg>
<div class="r" style="left:300px;top:1004px;width:30px;height:7px;background:linear-gradient(90deg,#4a6a98,#a8a070 50%,#4a6a98)"></div>
<div class="r" style="left:371px;top:1004px;width:14px;height:7px;background:#2a6a5a"></div>
<div class="r" style="left:388px;top:1004px;width:18px;height:7px;background:#30353d"></div>
<div class="r" style="left:437px;top:1004px;width:20px;height:7px;background:#a8583a"></div>
<div class="r" style="left:458px;top:1004px;width:12px;height:7px;background:#b0aaa4"></div>
<div class="r" style="left:500px;top:1004px;width:28px;height:7px;background:#2a4068"></div>
<div class="r" style="left:528px;top:1004px;width:12px;height:7px;background:#8a9ab0"></div>
<div class="r" style="left:575px;top:1004px;width:14px;height:7px;background:#4a5680"></div>
<div class="r" style="left:589px;top:1004px;width:14px;height:7px;background:#806e64"></div>
<div class="r" style="left:666px;top:237px;width:800px;height:470px;background:#f0f0f0;border:2px solid #8c8c8c;box-shadow:0 4px 16px rgba(0,0,0,0.22)"></div>
<div class="r" style="left:667px;top:238px;width:800px;height:41px;background:#fff"></div>
<div class="t" style="left:679px;top:252.09px;font-size:16.6px;line-height:16.6px;color:#1a1a1a;transform:scaleY(1.09);transform-origin:0 14.05px;-webkit-text-stroke:0.25px #1a1a1a">Вставка гиперссылки</div>
<div class="t" style="left:688px;top:296.01px;font-size:15px;line-height:15px;color:#222;-webkit-text-stroke:0.25px #222">Связать с:</div>
<div class="t" style="left:801px;top:296.01px;font-size:15px;line-height:15px;color:#222;-webkit-text-stroke:0.25px #222">Те<u>к</u>ст:</div>
<div class="r" style="left:846px;top:291px;width:586px;height:28px;background:#fff;border:1px solid #b4b4b4"></div>
<div class="t" style="left:851px;top:296.00px;font-size:15.8px;line-height:15.8px;color:#222;">Гиперсілтеме</div>
<div class="r" style="left:800px;top:327px;width:643px;height:1px;background:#dadada"></div>
<div class="r" style="left:800px;top:328px;width:643px;height:1px;background:#fafafa"></div>
<div class="t" style="left:801px;top:347.01px;font-size:15px;line-height:15px;color:#222;-webkit-text-stroke:0.25px #222"><u>И</u>скать в:</div>
<div class="r" style="left:911px;top:338px;width:379px;height:30px;background:#fff;border:1px solid #acacac"></div>
<div class="r" style="left:1266px;top:339px;width:23px;height:28px;background:#e3e3e3;border-left:1px solid #acacac"></div>
<svg class="r" style="left:1268px;top:345px" width="18" height="14" viewBox="0 0 18 14"><path d="M4 4 L9 9 L14 4" fill="none" stroke="#555" stroke-width="1.6"/></svg>
<div class="t" style="left:948px;top:346.00px;font-size:16.5px;line-height:16.5px;color:#222;-webkit-text-stroke:0.2px #222">Документы</div>
<div class="r" style="left:1302px;top:338px;width:32px;height:29px;background:#e4e4e4;border:1px solid #ababab"></div>
<div class="r" style="left:1360px;top:338px;width:31px;height:29px;background:#e4e4e4;border:1px solid #ababab"></div>
<div class="r" style="left:1400px;top:338px;width:31px;height:29px;background:#e4e4e4;border:1px solid #ababab"></div>
<div class="r" style="left:675px;top:321px;width:113px;height:376px;background:#f2f2f2;border:1px solid #a8a8a8"></div>
<div class="r" style="left:676px;top:322px;width:111px;height:90px;background:#bcd7f1"></div>
<div class="t" style="left:531px;width:400px;text-align:center;top:361.46px;font-size:16px;line-height:16px;color:#1e1e1e;transform:scaleY(0.92);transform-origin:0 13.54px;-webkit-text-stroke:0.25px #1e1e1e">Файл, <u>в</u>еб-</div>
<div class="t" style="left:531px;width:400px;text-align:center;top:380.46px;font-size:16px;line-height:16px;color:#1e1e1e;transform:scaleY(0.92);transform-origin:0 13.54px;-webkit-text-stroke:0.25px #1e1e1e">страницей</div>
<div class="t" style="left:531px;width:400px;text-align:center;top:454.46px;font-size:16px;line-height:16px;color:#1e1e1e;transform:scaleY(0.92);transform-origin:0 13.54px;-webkit-text-stroke:0.25px #1e1e1e"><u>М</u>есто в</div>
<div class="t" style="left:531px;width:400px;text-align:center;top:472.96px;font-size:16px;line-height:16px;color:#1e1e1e;transform:scaleY(0.92);transform-origin:0 13.54px;-webkit-text-stroke:0.25px #1e1e1e">документе</div>
<div class="t" style="left:531px;width:400px;text-align:center;top:545.96px;font-size:16px;line-height:16px;color:#1e1e1e;transform:scaleY(0.92);transform-origin:0 13.54px;-webkit-text-stroke:0.25px #1e1e1e">Н<u>о</u>вый</div>
<div class="t" style="left:531px;width:400px;text-align:center;top:563.96px;font-size:16px;line-height:16px;color:#1e1e1e;transform:scaleY(0.92);transform-origin:0 13.54px;-webkit-text-stroke:0.25px #1e1e1e">документ</div>
<div class="t" style="left:531px;width:400px;text-align:center;top:636.96px;font-size:16px;line-height:16px;color:#1e1e1e;transform:scaleY(0.92);transform-origin:0 13.54px;-webkit-text-stroke:0.25px #1e1e1e">Электро<u>н</u>ная</div>
<div class="t" style="left:531px;width:400px;text-align:center;top:654.96px;font-size:16px;line-height:16px;color:#1e1e1e;transform:scaleY(0.92);transform-origin:0 13.54px;-webkit-text-stroke:0.25px #1e1e1e">почта</div>
<svg class="r" style="left:716px;top:334px" width="30" height="30" viewBox="0 0 30 30"><path d="M4.5 4 h12 l2.5 2.5 v18 h-14.5 z" fill="#f4f8fb" stroke="#6c7780" stroke-width="1.3"/><path d="M4.8 4.5 v20" stroke="#3d4650" stroke-width="1.6"/><path d="M10.5 7.5 h11 l4.8 4.8 v14.2 h-15.8 z" fill="#f1ead0" stroke="#3a3a3a" stroke-width="1.2"/><path d="M26.3 12 v14.5 h-15.8" fill="none" stroke="#222" stroke-width="2"/><circle cx="18.2" cy="16.6" r="4.4" fill="#0f4658"/><circle cx="19.2" cy="16" r="2.2" fill="#2d8fc4"/></svg>
<svg class="r" style="left:716px;top:424px" width="30" height="30" viewBox="0 0 30 30"><path d="M8.5 4.5 h12 l5.5 5.5 v17.5 h-17.5 z" fill="#f2f4fa" stroke="#555" stroke-width="1.2"/><path d="M26 10 v17.5 h-17.5" fill="none" stroke="#2a2a2a" stroke-width="2"/><path d="M17 13 h5 M17 17 h5 M17 21 h5" stroke="#aaa" stroke-width="1"/><path d="M4.5 17.5 l5.5 -5.5 l6 6 l-6 6.5 z" fill="#1a4fd0" stroke="#2a3a6a" stroke-width="1"/></svg>
<svg class="r" style="left:716px;top:516px" width="30" height="30" viewBox="0 0 30 30"><path d="M8.5 6.5 h12 l5.5 5.5 v15.5 h-17.5 z" fill="#f0f0f4" stroke="#666" stroke-width="1.2"/><path d="M26 12 v15.5 h-17.5" fill="none" stroke="#2a2a2a" stroke-width="2"/><g stroke="#c8c050" stroke-width="1.5"><path d="M9 3.5 v12 M3 9.5 h12 M5 5.5 l8 8 M13 5.5 l-8 8"/></g><circle cx="9" cy="9.5" r="2.2" fill="#f4f0b0"/></svg>
<svg class="r" style="left:716px;top:607px" width="30" height="30" viewBox="0 0 30 30"><path d="M8.5 4.5 h12 l5.5 5.5 v16.5 h-17.5 z" fill="#f0f0f2" stroke="#777" stroke-width="1.2"/><path d="M26 10 v16.5 h-7" fill="none" stroke="#2a2a2a" stroke-width="2"/><rect x="4.5" y="17.5" width="15" height="10" fill="#d6d8b4" stroke="#3e4232" stroke-width="1.6"/><path d="M5.5 18.5 l7 5 l7 -5" fill="none" stroke="#f6f6e4" stroke-width="1.2"/></svg>
<svg class="r" style="left:917px;top:340px" width="22" height="26" viewBox="0 0 22 26"><path d="M2.5 2.5 h12 l4 4 v17 h-16 z" fill="#f6f7f9" stroke="#9aa" stroke-width="1"/><path d="M6 6 l2 3 M12 10 l-2 3 M8 15 l2 3" stroke="#3d7fd6" stroke-width="1.4"/></svg>
<svg class="r" style="left:1302px;top:338px" width="32" height="29" viewBox="0 0 32 29"><path d="M8 16 v-9 h4 l1.5 2 h13 v7 z" fill="#f8f3e8"/><path d="M12 7.5 l13 -2 v11 h-13 z" fill="#fff"/><rect x="6.5" y="15" width="22" height="11" fill="#f6bd5e"/><path d="M6.5 15 h22 v2 h-22z" fill="#f9cf85"/><path d="M8.5 4.5 c4 0 5 5 1 7" fill="none" stroke="#2f4f86" stroke-width="1.6"/><path d="M7 10 l3 2.5 l0.5 -3.5z" fill="#2f4f86"/></svg>
<svg class="r" style="left:1360px;top:338px" width="31" height="29" viewBox="0 0 31 29"><circle cx="14.5" cy="12.5" r="9.5" fill="#dcebf9" stroke="#7f9fce" stroke-width="1.3" stroke-dasharray="3 1.5"/><circle cx="17.5" cy="16" r="5" fill="#fafafa" stroke="#444" stroke-width="1.8"/><path d="M21 19.5 l6 5.5" stroke="#444" stroke-width="2.4" stroke-linecap="round"/></svg>
<svg class="r" style="left:1400px;top:338px" width="31" height="29" viewBox="0 0 31 29"><path d="M7 14 v-8 h5 l1.5 2 h12 v6 z" fill="#fbf6e8"/><rect x="8" y="6" width="16" height="9" fill="#fff"/><rect x="6" y="14" width="21" height="10" fill="#f6bd5e"/><path d="M6 14 h21 v2 h-21z" fill="#f9cf85"/></svg>
<div class="r" style="left:800px;top:379px;width:112px;height:226px;background:#f2f2f2;border:1px solid #a0a0a0"></div>
<div class="r" style="left:801px;top:380px;width:90px;height:73px;background:#bcd7f1"></div>
<div class="t" style="left:646px;width:400px;text-align:center;top:400.96px;font-size:16px;line-height:16px;color:#1e1e1e;transform:scaleY(0.92);transform-origin:0 13.54px;-webkit-text-stroke:0.25px #1e1e1e"><u>Т</u>екущая</div>
<div class="t" style="left:646px;width:400px;text-align:center;top:418.96px;font-size:16px;line-height:16px;color:#1e1e1e;transform:scaleY(0.92);transform-origin:0 13.54px;-webkit-text-stroke:0.25px #1e1e1e">папка</div>
<div class="t" style="left:655px;width:400px;text-align:center;top:467.96px;font-size:16px;line-height:16px;color:#1e1e1e;transform:scaleY(0.92);transform-origin:0 13.54px;-webkit-text-stroke:0.25px #1e1e1e">Просмотрен-</div>
<div class="t" style="left:655px;width:400px;text-align:center;top:485.46px;font-size:16px;line-height:16px;color:#1e1e1e;transform:scaleY(0.92);transform-origin:0 13.54px;-webkit-text-stroke:0.25px #1e1e1e">ные</div>
<div class="t" style="left:655px;width:400px;text-align:center;top:503.96px;font-size:16px;line-height:16px;color:#1e1e1e;transform:scaleY(0.92);transform-origin:0 13.54px;-webkit-text-stroke:0.25px #1e1e1e">стра<u>н</u>ицы</div>
<div class="t" style="left:647px;width:400px;text-align:center;top:551.46px;font-size:16px;line-height:16px;color:#1e1e1e;transform:scaleY(0.92);transform-origin:0 13.54px;-webkit-text-stroke:0.25px #1e1e1e">Посл<u>е</u>дние</div>
<div class="t" style="left:647px;width:400px;text-align:center;top:567.96px;font-size:16px;line-height:16px;color:#1e1e1e;transform:scaleY(0.92);transform-origin:0 13.54px;-webkit-text-stroke:0.25px #1e1e1e">файлы</div>
<div class="r" style="left:911px;top:379px;width:521px;height:226px;background:#fff;border:1px solid #a0a0a0;border-left:1px solid #8a8a8a"></div>
<div class="r" style="left:920px;top:380px;width:18px;height:21px;background:linear-gradient(90deg,#f5c95a,#fbdc84 40%,#f9d677)"></div>
<div class="t" style="left:947.5px;top:385.57px;font-size:16px;line-height:16px;color:#1e1e1e;transform:scaleY(1.12);transform-origin:0 13.54px;-webkit-text-stroke:0.2px #1e1e1e">аа ЭЦП 2020</div>
<div class="r" style="left:920px;top:406px;width:18px;height:21px;background:linear-gradient(90deg,#f5c95a,#fbdc84 40%,#f9d677)"></div>
<div class="t" style="left:947.5px;top:410.72px;font-size:16px;line-height:16px;color:#1e1e1e;transform:scaleY(1.12);transform-origin:0 13.54px;-webkit-text-stroke:0.2px #1e1e1e">Adobe</div>
<div class="r" style="left:920px;top:431px;width:18px;height:21px;background:linear-gradient(90deg,#f5c95a,#fbdc84 40%,#f9d677)"></div>
<div class="t" style="left:947.5px;top:435.88px;font-size:16px;line-height:16px;color:#1e1e1e;transform:scaleY(1.12);transform-origin:0 13.54px;-webkit-text-stroke:0.2px #1e1e1e">Fax</div>
<div class="r" style="left:920px;top:456px;width:18px;height:21px;background:linear-gradient(90deg,#f5c95a,#fbdc84 40%,#f9d677)"></div>
<div class="t" style="left:947.5px;top:461.03px;font-size:16px;line-height:16px;color:#1e1e1e;transform:scaleY(1.12);transform-origin:0 13.54px;-webkit-text-stroke:0.2px #1e1e1e">FlashIntegro</div>
<div class="r" style="left:920px;top:481px;width:18px;height:21px;background:linear-gradient(90deg,#f5c95a,#fbdc84 40%,#f9d677)"></div>
<div class="t" style="left:947.5px;top:486.18px;font-size:16px;line-height:16px;color:#1e1e1e;transform:scaleY(1.12);transform-origin:0 13.54px;-webkit-text-stroke:0.2px #1e1e1e">IISExpress</div>
<div class="r" style="left:920px;top:506px;width:18px;height:21px;background:linear-gradient(90deg,#f5c95a,#fbdc84 40%,#f9d677)"></div>
<div class="t" style="left:947.5px;top:511.32px;font-size:16px;line-height:16px;color:#1e1e1e;transform:scaleY(1.12);transform-origin:0 13.54px;-webkit-text-stroke:0.2px #1e1e1e">LEGO Creations</div>
<div class="r" style="left:920px;top:531px;width:18px;height:21px;background:linear-gradient(90deg,#f5c95a,#fbdc84 40%,#f9d677)"></div>
<div class="t" style="left:947.5px;top:536.47px;font-size:16px;line-height:16px;color:#1e1e1e;transform:scaleY(1.12);transform-origin:0 13.54px;-webkit-text-stroke:0.2px #1e1e1e">LEGO Education EV3</div>
<div class="r" style="left:920px;top:557px;width:18px;height:21px;background:linear-gradient(90deg,#f5c95a,#fbdc84 40%,#f9d677)"></div>
<div class="t" style="left:947.5px;top:561.63px;font-size:16px;line-height:16px;color:#1e1e1e;transform:scaleY(1.12);transform-origin:0 13.54px;-webkit-text-stroke:0.2px #1e1e1e">LEGO Education EV3 Content</div>
<div class="r" style="left:920px;top:582px;width:18px;height:21px;background:linear-gradient(90deg,#f5c95a,#fbdc84 40%,#f9d677)"></div>
<div class="t" style="left:947.5px;top:586.78px;font-size:16px;line-height:16px;color:#1e1e1e;transform:scaleY(1.12);transform-origin:0 13.54px;-webkit-text-stroke:0.2px #1e1e1e">Lightshot</div>
<div class="r" style="left:1408px;top:380px;width:23px;height:224px;background:#f0f0f0"></div>
<div class="r" style="left:1408px;top:405px;width:22px;height:55px;background:#cdcdcd"></div>
<svg class="r" style="left:1411px;top:386px" width="16" height="12" viewBox="0 0 16 12"><path d="M3 9 L8 4 L13 9" fill="none" stroke="#555" stroke-width="2"/></svg>
<svg class="r" style="left:1411px;top:586px" width="16" height="12" viewBox="0 0 16 12"><path d="M3 3 L8 8 L13 3" fill="none" stroke="#555" stroke-width="2"/></svg>
<div class="t" style="left:801px;top:621.01px;font-size:15px;line-height:15px;color:#222;-webkit-text-stroke:0.25px #222"><u>А</u>дрес:</div>
<div class="r" style="left:912px;top:613px;width:520px;height:29px;background:#fff;border:1px solid #b4b4b4"></div>
<div class="r" style="left:1407px;top:614px;width:24px;height:27px;background:#eef4fb;border:2px solid #4c89c8"></div>
<svg class="r" style="left:1409px;top:620px" width="20" height="14" viewBox="0 0 20 14"><path d="M4 4 L10 10 L16 4" fill="none" stroke="#444" stroke-width="1.6"/></svg>
<div class="r" style="left:916px;top:618px;width:2px;height:19px;background:#222"></div>
<svg class="r" style="left:936px;top:612px" width="14" height="27" viewBox="0 0 14 27"><path d="M3 1.5 h8 M7 1.5 v23 M3 24.5 h8" fill="none" stroke="#222" stroke-width="1.6"/></svg>
<div class="r" style="left:800px;top:652px;width:643px;height:1px;background:#e4e4e4"></div>
<div class="r" style="left:1377px;top:664px;width:70px;height:32px;background:#cccccc;border:1px solid #c4c4c4"></div>
<div class="t" style="left:1418px;top:674.00px;font-size:16px;line-height:16px;color:#b2b2b2;">OK</div>
<div class="r" style="left:274px;top:940px;width:898px;height:65px;background:linear-gradient(#5a6476,#4f5663 60%,#4a4f58);border-radius:10px"></div>
<div class="t" style="left:383px;top:964.00px;font-size:21.5px;line-height:21.5px;color:#fff;">0:32</div>
<div class="t" style="left:851px;top:964.00px;font-size:21.5px;line-height:21.5px;color:#fff;">1:56</div>
<svg class="r" style="left:318px;top:961px" width="20" height="22" viewBox="0 0 20 22"><rect x="2" y="2" width="6" height="18" rx="1.5" fill="#fff"/><rect x="12.5" y="2" width="6" height="18" rx="1.5" fill="#fff"/></svg>
<div class="r" style="left:456px;top:968px;width:363px;height:6px;background:#acb0b8;border-radius:3px"></div>
<div class="r" style="left:456px;top:968px;width:101px;height:6px;background:#fff;border-radius:3px 0 0 3px"></div>
<svg class="r" style="left:930px;top:955px" width="42" height="32" viewBox="0 0 42 32"><path d="M4.5 11 h5.5 l6 -4.5 v17.5 l-6 -4.5 h-5.5 z" fill="#fff"/><g fill="none" stroke="#fff" stroke-width="2.1" stroke-linecap="round"><path d="M23 11.5 A6.25 6.25 0 0 1 23 20.5"/><path d="M27 7.5 A10.6 10.6 0 0 1 27 24.5"/><path d="M31 3.5 A16 16 0 0 1 31 28.5"/></g></svg>
<svg class="r" style="left:1003px;top:953px" width="36" height="36" viewBox="0 0 36 36"><g fill="none" stroke="#fff" stroke-width="3" stroke-linecap="round"><path d="M12 5 v8 h-8 M23 5 v8 h8 M12 31 v-8 h-8 M23 31 v-8 h8"/></g></svg>
<svg class="r" style="left:1078px;top:957px" width="28" height="28" viewBox="0 0 28 28"><path d="M4.5 3.5 L24 23 M24 3.5 L4.5 23" stroke="#fff" stroke-width="2.8" stroke-linecap="round"/></svg>
<div class="r" style="left:0px;top:0px;width:3px;height:1011px;background:#000"></div>
<div class="r" style="left:1443px;top:0px;width:12px;height:1011px;background:#000"></div>
</body></html>
